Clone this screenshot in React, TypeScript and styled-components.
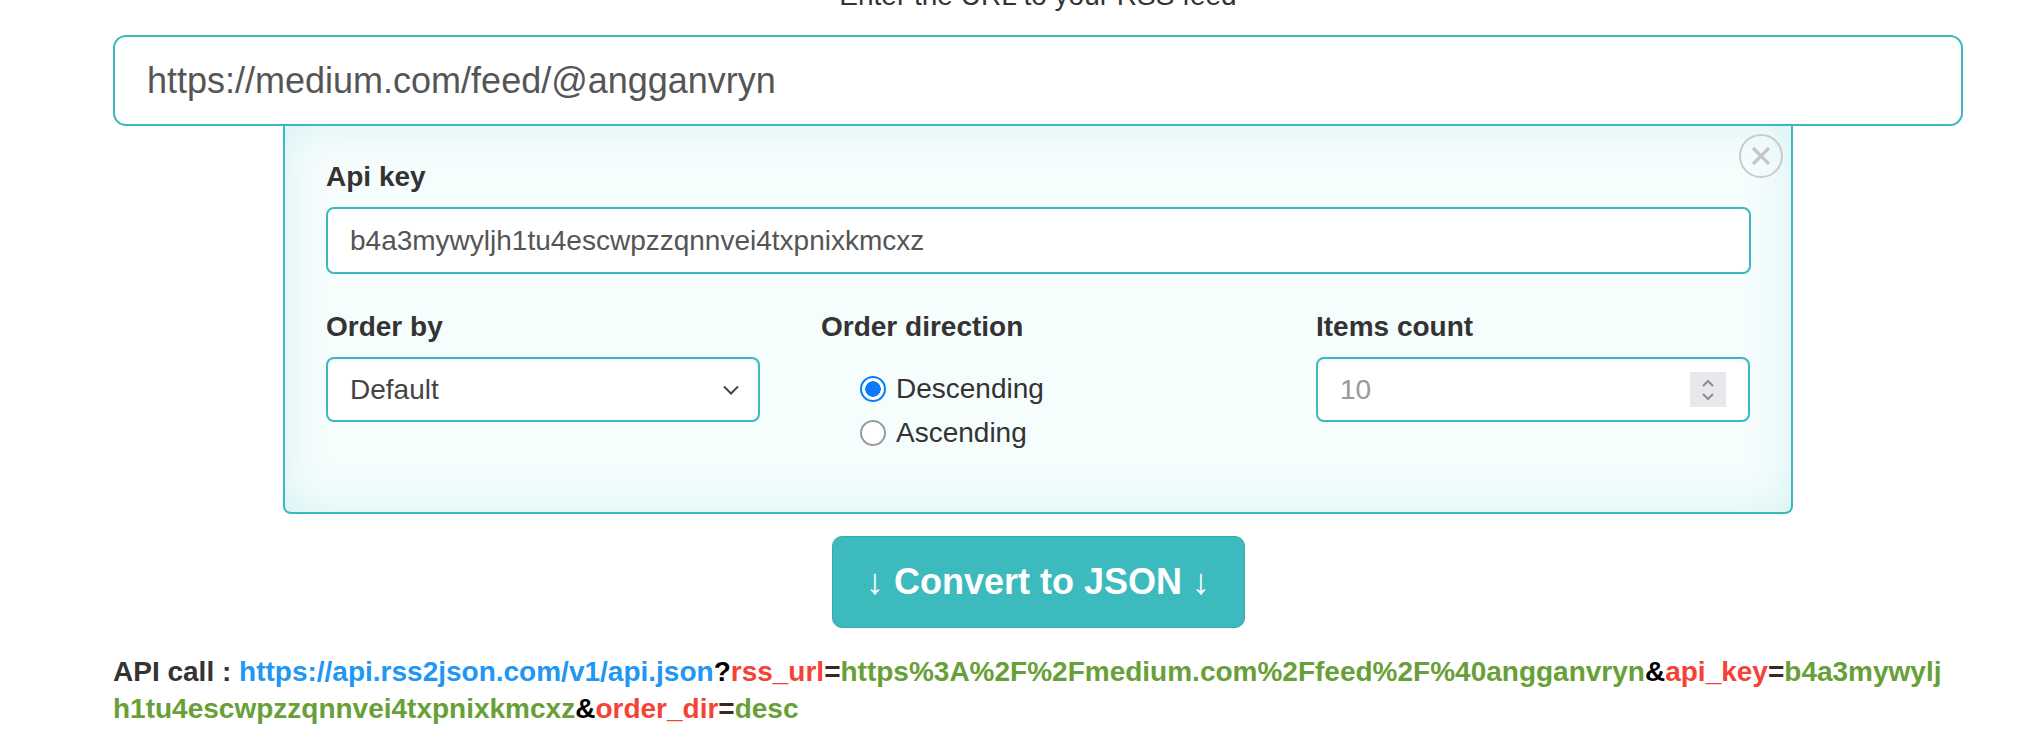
import styled, { createGlobalStyle } from "styled-components";

const GlobalStyle = createGlobalStyle`
  body {
    margin: 0;
    background: #fff;
    font-family: "Liberation Sans", Arial, sans-serif;
    color: #333;
    overflow: hidden;
  }
`

const teal = "#3cb9bc";

const Page = styled.div`
  width: 1850px;
  margin-left: 113px;
`
const Heading = styled.div`
  margin-top: -20px;
  margin-bottom: 23px;
  text-align: center;
  font-size: 28px;
  line-height: 32px;
  color: #333;
`
const UrlInput = styled.input`
  position: relative;
  z-index: 1;
  display: block;
  box-sizing: border-box;
  width: 100%;
  height: 91px;
  padding: 0 0 0 32px;
  border: 2px solid ${teal};
  border-radius: 13px;
  background: #fff;
  font-family: inherit;
  font-size: 36px;
  color: #555;
  outline: none;
`
const Panel = styled.div`
  position: relative;
  box-sizing: border-box;
  width: 1510px;
  margin: -2px auto 0;
  padding: 36px 40px 57px 41px;
  border: 2px solid ${teal};
  border-top: none;
  border-radius: 0 0 8px 8px;
  background: #f6fdfd;
  box-shadow: inset 0 0 45px rgba(61, 186, 189, 0.17);
`
const CloseButton = styled.button`
  position: absolute;
  top: 10px;
  right: 8px;
  width: 44px;
  height: 44px;
  padding: 0;
  border: 2px solid #cbcbcb;
  border-radius: 50%;
  background: transparent;
  display: flex;
  align-items: center;
  justify-content: center;
`
const Label = styled.div`
  font-size: 28px;
  line-height: 34px;
  font-weight: bold;
  color: #333;
  margin-bottom: 13px;
`
const Field = styled.input`
  display: block;
  box-sizing: border-box;
  width: 100%;
  height: 67px;
  padding: 0 0 0 22px;
  border: 2px solid ${teal};
  border-radius: 8px;
  background: #fff;
  font-family: inherit;
  font-size: 28px;
  color: #555;
  outline: none;
`
const Row = styled.div`
  display: grid;
  grid-template-columns: repeat(3, 434px);
  column-gap: 61px;
  margin-top: 36px;
`
const Box = styled.div<{ muted?: boolean }>`
  box-sizing: border-box;
  height: 65px;
  padding: 0 18px 0 22px;
  border: 2px solid ${teal};
  border-radius: 8px;
  background: #fff;
  box-shadow: inset 0 2px 3px rgba(0, 0, 0, 0.06);
  display: flex;
  align-items: center;
  justify-content: space-between;
  font-size: 28px;
  color: ${(p) => (p.muted ? "#999" : "#444")};
`
const Spinner = styled.div`
  width: 36px;
  height: 35px;
  margin-right: 4px;
  background: #e8e8ed;
  display: flex;
  align-items: center;
  justify-content: center;
`
const RadioGroup = styled.div`
  padding: 10px 0 0 39px;
`
const RadioRow = styled.label`
  display: flex;
  align-items: center;
  height: 44px;
  font-size: 28px;
  color: #333;
`
const Radio = styled.span<{ checked?: boolean }>`
  box-sizing: border-box;
  width: 26px;
  height: 26px;
  margin-right: 10px;
  border-radius: 50%;
  border: 2px solid ${(p) => (p.checked ? "#0a7aff" : "#9a9aa2")};
  background: ${(p) => (p.checked ? "radial-gradient(circle, #0a7aff 0 7.5px, #fff 8px)" : "#fff")};
`
const ConvertButton = styled.button`
  display: block;
  box-sizing: border-box;
  width: 413px;
  height: 92px;
  margin: 22px auto 0;
  border: 1px solid #36abae;
  border-radius: 10px;
  background: #3dbabe;
  color: #fff;
  font-family: inherit;
  font-size: 36px;
  font-weight: bold;
`
const Arrow = styled.span`
  font-weight: normal;
`
const ApiCall = styled.div`
  width: 1832px;
  margin-top: 25px;
  font-size: 28px;
  line-height: 37px;
  font-weight: bold;
  word-break: break-all;
  color: #333;
`
const Part = styled.span<{ kind: "base" | "sep" | "key" | "eq" | "val" }>`
  color: ${(p) =>
    ({ base: "#2196f3", sep: "#000", key: "#f44336", eq: "#3e2723", val: "#689f38" })[p.kind]};
`

const params: [string, string][] = [
  ["rss_url", "https%3A%2F%2Fmedium.com%2Ffeed%2F%40angganvryn"],
  ["api_key", "b4a3mywyljh1tu4escwpzzqnnvei4txpnixkmcxz"],
  ["order_dir", "desc"],
];

function App() {
  return (
    <Page>
      <GlobalStyle />
      <Heading>Enter the URL to your RSS feed</Heading>
      <UrlInput readOnly value="https://medium.com/feed/@angganvryn" />
      <Panel>
        <CloseButton aria-label="close">
          <svg width="22" height="22" viewBox="0 0 22 22">
            <path d="M3 3 L19 19 M19 3 L3 19" stroke="#c6c6c6" strokeWidth="3.2" />
          </svg>
        </CloseButton>
        <Label>Api key</Label>
        <Field readOnly value="b4a3mywyljh1tu4escwpzzqnnvei4txpnixkmcxz" />
        <Row>
          <div>
            <Label>Order by</Label>
            <Box>
              Default
              <svg width="18" height="12" viewBox="0 0 18 12">
                <path d="M2 2.5 L9 9.5 L16 2.5" fill="none" stroke="#444" strokeWidth="2" />
              </svg>
            </Box>
          </div>
          <div>
            <Label>Order direction</Label>
            <RadioGroup>
              <RadioRow><Radio checked />Descending</RadioRow>
              <RadioRow><Radio />Ascending</RadioRow>
            </RadioGroup>
          </div>
          <div>
            <Label>Items count</Label>
            <Box muted>
              10
              <Spinner>
                <svg width="16" height="26" viewBox="0 0 16 26">
                  <path d="M3 9 L8 4 L13 9 M3 17 L8 22 L13 17" fill="none" stroke="#8e8e99" strokeWidth="2.2" />
                </svg>
              </Spinner>
            </Box>
          </div>
        </Row>
      </Panel>
      <ConvertButton><Arrow>↓</Arrow> Convert to JSON <Arrow>↓</Arrow></ConvertButton>
      <ApiCall>
        API call : <Part kind="base">https://api.rss2json.com/v1/api.json</Part>
        <Part kind="sep">?</Part>
        {params.map(([k, v], i) => (
          <span key={k}>
            {i > 0 && <Part kind="sep">&amp;</Part>}
            <Part kind="key">{k}</Part>
            <Part kind="eq">=</Part>
            <Part kind="val">{v}</Part>
          </span>
        ))}
      </ApiCall>
    </Page>
  );
}

export default App;
